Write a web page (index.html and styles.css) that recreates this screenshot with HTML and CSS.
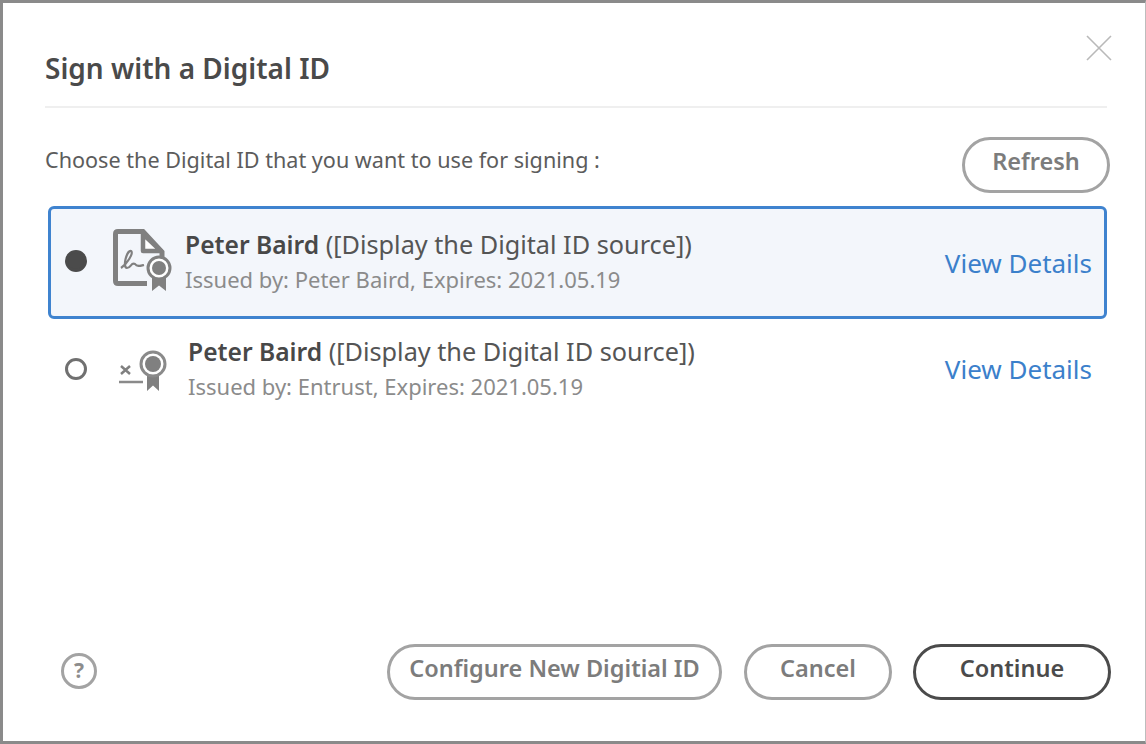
FILE: index.html
```html
<!DOCTYPE html>
<html lang="en">
<head>
<meta charset="utf-8">
<title>Sign with a Digital ID</title>
<link rel="stylesheet" href="styles.css">
</head>
<body>
<main class="dialog">
  <button class="close" aria-label="Close">
    <svg width="28" height="28" viewBox="0 0 28 28"><path d="M2 2 26 26M26 2 2 26" fill="none" stroke="#b9b9b9" stroke-width="1.6"/></svg>
  </button>
  <header class="head"><h1 class="title">Sign with a Digital ID</h1></header>
  <div class="prompt">
    <p class="prompt-text">Choose the Digital ID that you want to use for signing :</p>
    <button class="btn btn-refresh">Refresh</button>
  </div>
  <ul class="ids">
    <li class="id id-selected">
      <span class="radio radio-on"></span>
      <svg class="id-icon" width="62" height="66" viewBox="0 0 62 66">
        <path d="M35 55.500H6Q3.500 55.500 3.500 53V6Q3.500 3.500 6 3.500H31L50 24V30" fill="none" stroke="#808080" stroke-width="5"/>
        <path d="M31 6V23H49Z" fill="#fff" stroke="#808080" stroke-width="4.500" stroke-linejoin="round"/>
        <path d="M9 40C15 36 22 25 19 23C15 22 10 39 15 40C19 40 19 34 23 36C25 39 28 38 32 37" fill="none" stroke="#808080" stroke-width="2.200"/>
        <path d="M40 48V63L47 57.500L54 63V48Z" fill="#808080"/>
        <circle cx="47" cy="40" r="11" fill="#fff" stroke="#808080" stroke-width="3"/>
        <circle cx="47" cy="40" r="7" fill="#808080"/>
      </svg>
      <div class="id-text">
        <div class="id-name"><b class="id-person">Peter Baird</b> ([Display the Digital ID source])</div>
        <div class="id-meta">Issued by: Peter Baird, Expires: 2021.05.19</div>
      </div>
      <a class="details details-selected" href="#">View Details</a>
    </li>
    <li class="id id-plain">
      <span class="radio"></span>
      <svg class="id-icon id-icon-plain" width="62" height="50" viewBox="0 0 62 50">
        <path d="M9 22 18 30M18 22 9 30" fill="none" stroke="#808080" stroke-width="2.500"/>
        <path d="M7 38H31" fill="none" stroke="#8a8a8a" stroke-width="2.500"/>
        <path d="M35 26V47L41 41.500L47 47V26Z" fill="#808080"/>
        <circle cx="41" cy="20" r="12" fill="#fff" stroke="#8a8a8a" stroke-width="3"/>
        <circle cx="41" cy="20" r="8" fill="#808080"/>
      </svg>
      <div class="id-text">
        <div class="id-name"><b class="id-person">Peter Baird</b> ([Display the Digital ID source])</div>
        <div class="id-meta">Issued by: Entrust, Expires: 2021.05.19</div>
      </div>
      <a class="details" href="#">View Details</a>
    </li>
  </ul>
  <footer class="foot">
    <span class="help">?</span>
    <div class="actions">
      <button class="btn btn-config">Configure New Digitial ID</button>
      <button class="btn btn-cancel">Cancel</button>
      <button class="btn btn-primary">Continue</button>
    </div>
  </footer>
</main>
</body>
</html>
```
FILE: styles.css
```css
* { box-sizing: border-box; }
html, body { margin: 0; height: 100%; background: #fff; }
body { font-family: "Noto Sans", "Open Sans", sans-serif; color: #4b4b4b; overflow: hidden; }
.dialog {
  position: relative;
  height: 744px;
  display: flex;
  flex-direction: column;
  border: 3px solid #8a8a8a;
  border-right: 1px solid #bdbdbd;
  padding: 0 38px 41px 42px;
}
.close { position: absolute; top: 31px; right: 32px; padding: 0; border: 0; background: none; line-height: 0; }
.head { height: 105px; padding-top: 43px; border-bottom: 2px solid #efefef; }
.title { margin: 0; font-size: 28px; line-height: 44px; font-weight: 600; color: #4a4a4a; }
.prompt { display: flex; align-items: center; justify-content: space-between; margin-top: 29px; margin-right: -3px; }
.prompt-text { margin: 0 0 12px; font-size: 21.6px; color: #5c5c5c; }
.btn {
  font-family: inherit;
  font-size: 23.5px;
  font-weight: 600;
  height: 56px;
  padding: 0 0 8px;
  border-radius: 28px;
  background: #fff;
  border: 3px solid #a3a3a3;
  color: #7c7c7c;
}
.btn-refresh { width: 148px; }
.ids { list-style: none; margin: 13px 0 0 3px; padding: 0; }
.id { display: flex; align-items: center; }
.id-selected { height: 113px; background: #f3f6fb; border: 3px solid #3f83cf; border-radius: 6px; padding: 0 12px 3px 14px; }
.id-plain { height: 99px; padding: 0 15px 0 17px; }
.radio { width: 22px; height: 22px; border-radius: 50%; border: 3.5px solid #707070; background: #fff; flex: none; }
.radio-on { background: #4b4b4b; border-color: #4b4b4b; }
.id-icon { flex: none; margin-left: 25px; margin-right: 11px; }
.id-icon-plain { margin-right: 14px; }
.id-text { flex: 1; }
.id-name { font-size: 25.25px; line-height: 34px; color: #555; }
.id-person { font-size: 24.6px; font-weight: 600; color: #484848; }
.id-meta { font-size: 22px; line-height: 34px; color: #8b8b8b; }
.details { font-size: 26px; color: #3b80cb; text-decoration: none; }
.details-selected { margin-top: 3px; }
.foot { margin-top: auto; display: flex; align-items: center; justify-content: space-between; margin-right: -4px; }
.help {
  margin: 0 0 2px 16px;
  width: 36px;
  height: 36px;
  border: 3px solid #a3a3a3;
  border-radius: 50%;
  color: #8d8d8d;
  font-size: 21px;
  font-weight: 700;
  line-height: 29px;
  text-align: center;
}
.actions { display: flex; gap: 22px; }
.btn-config { width: 335px; }
.btn-cancel { width: 148px; }
.btn-primary { width: 198px; margin-left: -1px; border-color: #4b4b4b; color: #4b4b4b; }
```
